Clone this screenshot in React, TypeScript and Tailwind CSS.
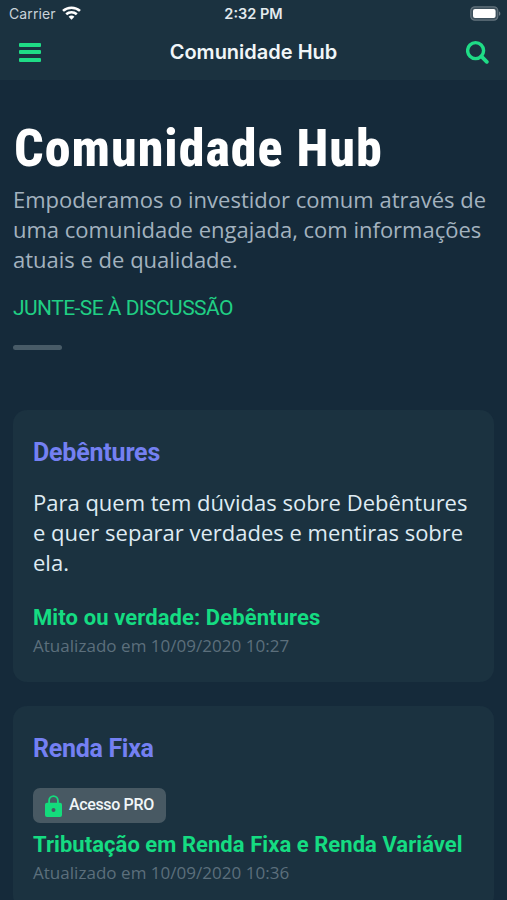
const topics = [
  {
    title: 'Debêntures',
    titleStyle: 'tracking-[-0.2px]',
    description: ['Para quem tem dúvidas sobre Debêntures', 'e quer separar verdades e mentiras sobre', 'ela.'],
    pro: false,
    post: 'Mito ou verdade: Debêntures',
    postStyle: 'tracking-[0.1px]',
    updated: 'Atualizado em 10/09/2020 10:27',
  },
  {
    title: 'Renda Fixa',
    titleStyle: 'tracking-[-0.3px]',
    description: [],
    pro: true,
    post: 'Tributação em Renda Fixa e Renda Variável',
    postStyle: 'tracking-[0.05px]',
    updated: 'Atualizado em 10/09/2020 10:36',
  },
];

function StatusBar() {
  return (
    <div className="flex h-7 items-center justify-between pl-[9px] pr-[6px] text-[14px] font-['Inter',sans-serif]">
      <div className="flex w-32 items-center gap-[6px] text-[#c9d3d9]">
        <span className="-mt-px tracking-[0.1px]">Carrier</span>
        <svg className="-mt-[2px]" width="19" height="14" viewBox="0 0 19 14" fill="none" stroke="#fff" strokeWidth="2.6">
          <path d="M1 4.9C5.6.6 13.4.6 18 4.9" />
          <path d="M4.2 8.2c3-2.7 7.6-2.7 10.6 0" />
          <path d="M6.6 10.8c1.6-1.6 4.2-1.6 5.8 0l-2.9 3z" fill="#fff" stroke="none" />
        </svg>
      </div>
      <span className="-ml-[3px] text-[14.5px] font-semibold text-[#e3eaee]">2:32 PM</span>
      <div className="flex w-32 justify-end">
        <svg width="31" height="16" viewBox="0 0 31 16">
          <rect x=".8" y=".8" width="27" height="13.4" rx="4" fill="#3d505c" stroke="#63737d" strokeWidth="1.2" />
          <rect x="3" y="3" width="22.6" height="9" rx="2" fill="#fff" />
          <path d="M29 5.4c1.8.6 1.8 3.8 0 4.4z" fill="#6d7c86" />
        </svg>
      </div>
    </div>
  );
}

function NavBar() {
  return (
    <div className="flex h-[52px] items-center justify-between pl-[19px] pr-[17px] pb-1">
      <button className="flex h-[19px] w-[22px] flex-col justify-between">
        <span className="h-1 w-full rounded-[1px] bg-[#1fdc86]" />
        <span className="h-1 w-full rounded-[1px] bg-[#1fdc86]" />
        <span className="h-1 w-full rounded-[1px] bg-[#1fdc86]" />
      </button>
      <span className="font-['Inter',sans-serif] text-[20px] font-semibold text-[#f1f6f8]">Comunidade Hub</span>
      <svg width="24" height="24" viewBox="0 0 24 24" fill="none" stroke="#1fdc86" strokeWidth="3.4">
        <circle cx="9.6" cy="10.6" r="8" />
        <path d="M15.4 16.4 20.8 21.8" strokeLinecap="round" strokeWidth="3.8" />
      </svg>
    </div>
  );
}

function LockIcon() {
  return (
    <svg width="17" height="22" viewBox="0 0 17 22" fill="none">
      <path d="M4.1 9V5.6a4.4 4.4 0 0 1 8.8 0V9" stroke="#14dc7c" strokeWidth="1.8" />
      <path fillRule="evenodd" d="M2 7.8h13a2 2 0 0 1 2 2V20a2 2 0 0 1-2 2H2a2 2 0 0 1-2-2V9.800a2 2 0 0 1 2-2zM8.500 13a2 2 0 1 0 0 4 2 2 0 0 0 0-4z" fill="#14dc7c" />
    </svg>
  );
}

function TopicCard({ topic }: { topic: (typeof topics)[number] }) {
  return (
    <div className="rounded-[14px] bg-[#1b3240] px-5 pt-7 pb-[23px]">
      <h2 className={`text-[25px] leading-[30px] font-bold text-[#7480f2] ${topic.titleStyle}`}>{topic.title}</h2>
      {topic.description.length > 0 && (
        <p className="mt-[19px] mb-[25px] font-['Open_Sans',sans-serif] text-[22px] leading-[30px] text-[#dfebf3]">
          {topic.description.map(line => (
            <span key={line} className="block whitespace-nowrap">{line}</span>
          ))}
        </p>
      )}
      {topic.pro && (
        <div className="mt-6 mb-[6px] flex h-[35px] w-[133px] items-center rounded-[7px] bg-[#485963] pl-3">
          <LockIcon />
          <span className="-mt-px ml-[7px] text-[16px] font-medium tracking-[-0.35px] whitespace-nowrap text-[#f1f6f8]">Acesso PRO</span>
        </div>
      )}
      <h3 className={`text-[22px] leading-[32px] font-bold whitespace-nowrap text-[#15dc82] ${topic.postStyle}`}>{topic.post}</h3>
      <div className="-mt-px font-['Open_Sans',sans-serif] text-[17px] leading-[26px] tracking-[0.03px] text-[#5c6f7c]">{topic.updated}</div>
    </div>
  );
}

function App() {
  return (
    <div className="h-[900px] overflow-hidden bg-[#152a3a] font-['Roboto',sans-serif]">
      <header className="h-20 bg-[#1b3240]">
        <StatusBar />
        <NavBar />
      </header>
      <main className="px-[13px] pt-[38px]">
        <h1 className="ml-px text-[52px] leading-[62px] font-extrabold font-stretch-[75%] tracking-[1px] whitespace-nowrap text-white">Comunidade Hub</h1>
        <p className="mt-1 font-['Open_Sans',sans-serif] text-[22px] leading-[30px] whitespace-nowrap text-[#a3b2bf]">
          Empoderamos o investidor comum através de<br />
          uma comunidade engajada, com informações<br />
          atuais e de qualidade.
        </p>
        <a className="mt-[20px] block text-[21px] leading-[28px] tracking-[-0.55px] text-[#20cf84]">JUNTE-SE À DISCUSSÃO</a>
        <div className="mt-[23px] h-[5px] w-[49px] rounded-full bg-[#485b67]" />
        <div className="mt-[60px] flex flex-col gap-6">
          {topics.map(topic => <TopicCard key={topic.title} topic={topic} />)}
        </div>
      </main>
    </div>
  );
}

export default App;
